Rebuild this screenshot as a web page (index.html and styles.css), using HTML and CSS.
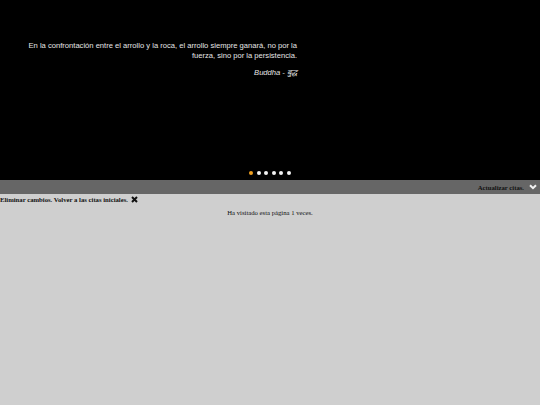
FILE: index.html
```html
<!DOCTYPE html>
<html lang="es">
<head>
<meta charset="utf-8">
<title>Citas</title>
<link rel="stylesheet" href="styles.css">
</head>
<body>
<div class="stage">
  <div class="quote">
    <p class="text">En la confrontación entre el arrollo y la roca, el arrollo siempre ganará, no por la fuerza, sino por la persistencia.</p>
    <p class="author">Buddha - बुद्ध</p>
  </div>
  <div class="dots">
    <span class="dot active"></span>
    <span class="dot"></span>
    <span class="dot"></span>
    <span class="dot"></span>
    <span class="dot"></span>
    <span class="dot"></span>
  </div>
</div>
<div class="bar">
  <span class="bar-label">Actualizar citas.</span>
  <svg class="chev" width="8" height="6" viewBox="0 0 8 6"><path d="M1 1.2 L4 4.2 L7 1.2" fill="none" stroke="#f2f2f2" stroke-width="2"/></svg>
</div>
<div class="reset">
  <span>Eliminar cambios. Volver a las citas iniciales.</span>
  <svg class="close" width="7" height="7" viewBox="0 0 7 7"><path d="M1 1 L6 6 M6 1 L1 6" stroke="#111" stroke-width="2"/></svg>
</div>
<p class="visits">Ha visitado esta página 1 veces.</p>
</body>
</html>
```
FILE: styles.css
```css
html, body {
  margin: 0;
  padding: 0;
  background: #cfcfcf;
}
body {
  font-family: "Liberation Serif", "Times New Roman", serif;
  font-size: 6.7px;
  color: #111;
}
.stage {
  background: #000;
  height: 180px;
  display: flex;
  flex-direction: column;
  box-sizing: border-box;
  padding-top: 41px;
}
.quote {
  width: 272px;
  margin-left: 25px;
  text-align: right;
  font-family: "Liberation Sans", Arial, sans-serif;
  font-size: 7.6px;
  line-height: 9.5px;
  color: #e6e6e6;
}
.quote p {
  margin: 0;
}
.author {
  font-style: italic;
  margin-top: 8px !important;
}
.dots {
  margin-top: auto;
  margin-bottom: 5px;
  display: flex;
  gap: 3.6px;
  padding-left: 249px;
}
.dot {
  width: 4px;
  height: 4px;
  border-radius: 50%;
  background: #f2f2f2;
}
.dot.active {
  background: #f0a020;
}
.bar {
  height: 14px;
  background: #666;
  display: flex;
  align-items: center;
  justify-content: flex-end;
  gap: 5px;
  padding-right: 3px;
}
.bar-label {
  font-weight: bold;
  color: #111;
}
.chev {
  display: block;
}
.reset {
  display: flex;
  align-items: center;
  gap: 3px;
  font-weight: bold;
  height: 10px;
}
.close {
  display: block;
}
.visits {
  margin: 5px 0 0;
  text-align: center;
}
```
